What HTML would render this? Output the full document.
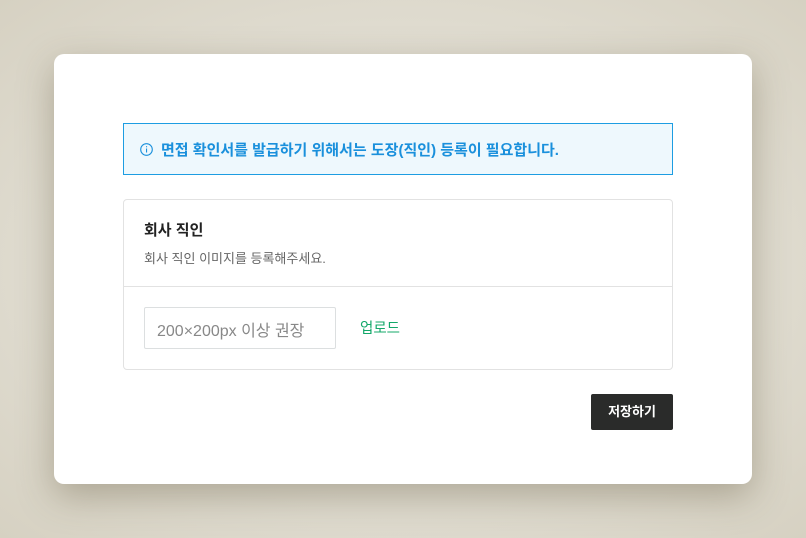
<!DOCTYPE html>
<html><head><meta charset="utf-8"><style>
*{box-sizing:border-box;margin:0;padding:0}
body{width:806px;height:538px;overflow:hidden;background:#dedacd;font-family:"Liberation Sans","Noto Sans CJK KR",sans-serif;position:relative}
.bg{position:absolute;inset:0;background:radial-gradient(ellipse at center,#e5e2d8 40%,#d6d1c2 100%)}
.card{position:absolute;left:54px;top:54px;width:698px;height:430px;background:#fff;border-radius:10px;box-shadow:0 12px 36px rgba(80,70,40,.35)}
.alert{position:absolute;left:69px;top:69px;width:550px;height:52px;border:1px solid #1d9de2;background:#eef8fd;color:#1a90dc;font-weight:bold;font-size:15px;display:flex;align-items:center;padding-left:16px}
.alert svg{margin-right:8px}
.box{position:absolute;left:69px;top:145px;width:550px;height:171px;border:1px solid #e2e2e2;border-radius:4px}
.t{position:absolute;left:20px;top:19px;font-size:15px;font-weight:bold;color:#222}
.s{position:absolute;left:20px;top:48px;font-size:13px;color:#666}
.hr{position:absolute;left:0;right:0;top:86px;border-top:1px solid #e2e2e2}
.in{position:absolute;left:20px;top:107px;width:192px;height:42px;border:1px solid #dcdfe0;border-radius:2px;font-size:16px;color:#888;padding:9px 0 0 12px}
.up{position:absolute;left:236px;top:117px;font-size:14.5px;color:#14a86a}
.btn{position:absolute;left:537px;top:340px;width:82px;height:36px;background:#2a2b2a;border-radius:2px;color:#fff;font-size:13px;font-weight:bold;text-align:center;line-height:36px}
</style></head><body><div class="bg"></div>
<div class="card">
<div class="alert"><svg width="13" height="13" viewBox="0 0 13 13"><circle cx="6.5" cy="6.5" r="5.8" fill="none" stroke="#1a90dc" stroke-width="1.1"/><rect x="6" y="5.5" width="1.1" height="4" fill="#1a90dc"/><rect x="6" y="3.2" width="1.1" height="1.1" fill="#1a90dc"/></svg>면접 확인서를 발급하기 위해서는 도장(직인) 등록이 필요합니다.</div>
<div class="box"><div class="t">회사 직인</div><div class="s">회사 직인 이미지를 등록해주세요.</div><div class="hr"></div>
<div class="in">200×200px 이상 권장</div><div class="up">업로드</div></div>
<div class="btn">저장하기</div>
</div></body></html>
